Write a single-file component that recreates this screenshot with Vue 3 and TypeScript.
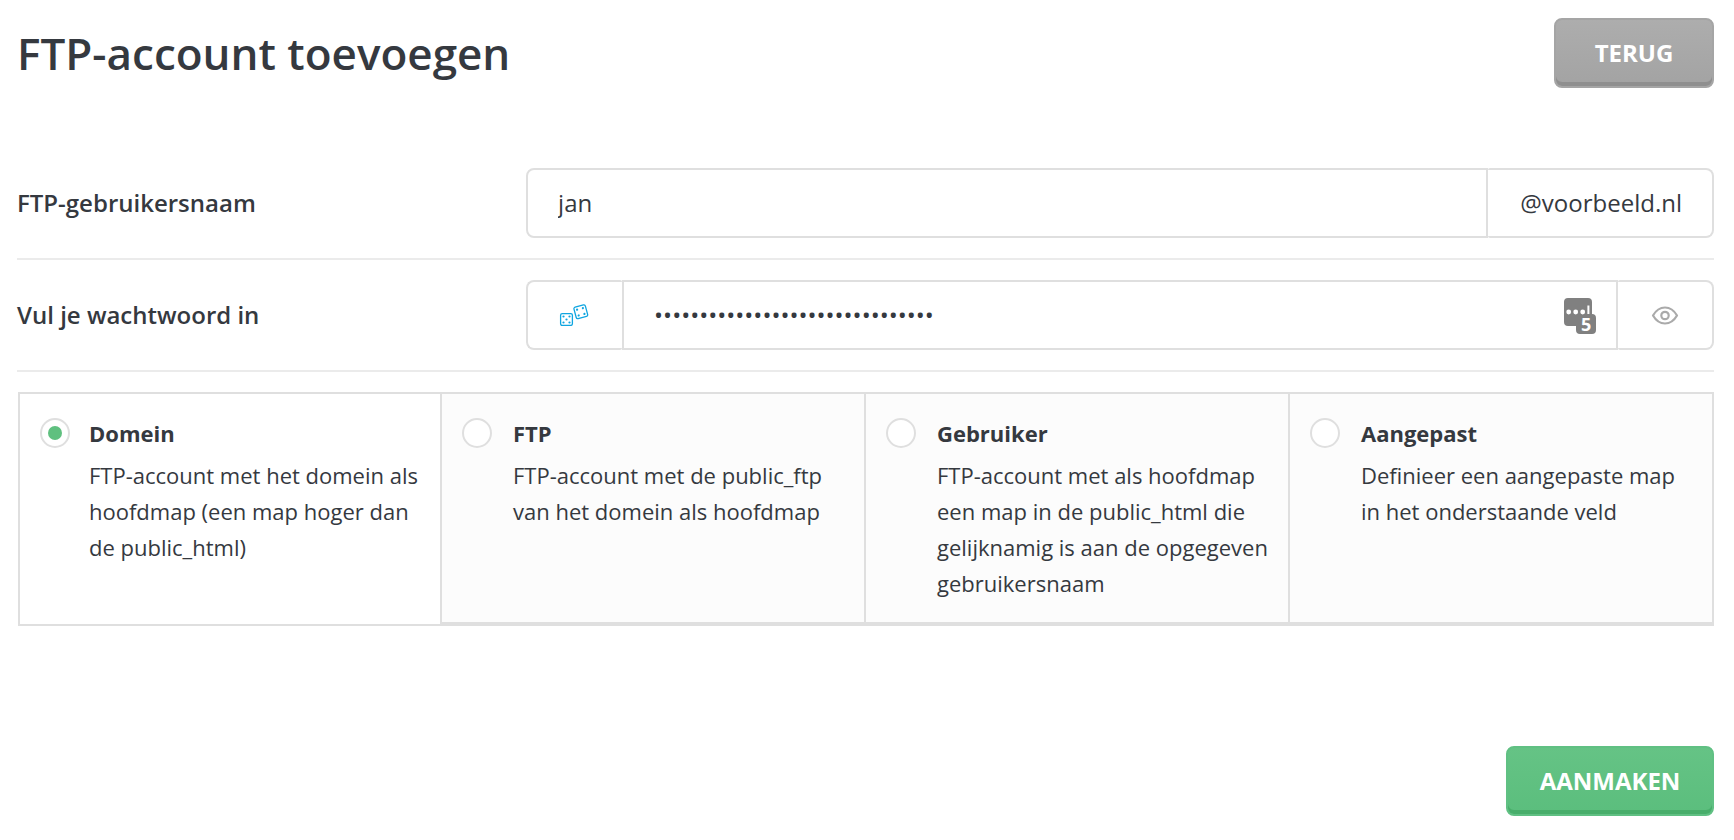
<script setup lang="ts">
import { ref } from 'vue'

interface AccountType {
  id: string
  title: string
  description: string
}

const accountTypes: AccountType[] = [
  {
    id: 'domein',
    title: 'Domein',
    description: 'FTP-account met het domein als hoofdmap (een map hoger dan de public_html)',
  },
  {
    id: 'ftp',
    title: 'FTP',
    description: 'FTP-account met de public_ftp van het domein als hoofdmap',
  },
  {
    id: 'gebruiker',
    title: 'Gebruiker',
    description:
      'FTP-account met als hoofdmap een map in de public_html die gelijknamig is aan de opgegeven gebruikersnaam',
  },
  {
    id: 'aangepast',
    title: 'Aangepast',
    description: 'Definieer een aangepaste map in het onderstaande veld',
  },
]

const username = ref('jan')
const password = ref('x'.repeat(31))
const selected = ref('domein')
const visible = ref(false)

function generatePassword(): void {
  const alphabet = 'abcdefghijkmnpqrstuvwxyzABCDEFGHJKLMNPQRSTUVWXYZ23456789'
  password.value = Array.from(
    { length: 31 },
    () => alphabet[Math.floor(Math.random() * alphabet.length)],
  ).join('')
}
</script>

<template>
  <form class="page" @submit.prevent>
    <header class="head">
      <h1>FTP-account toevoegen</h1>
      <button type="button" class="btn btn-grey">TERUG</button>
    </header>

    <div class="row">
      <label class="row-label" for="username">FTP-gebruikersnaam</label>
      <div class="group">
        <input id="username" v-model="username" class="field" type="text" />
        <span class="addon addon-text">@voorbeeld.nl</span>
      </div>
    </div>

    <div class="row">
      <label class="row-label" for="password">Vul je wachtwoord in</label>
      <div class="group">
        <button
          type="button"
          class="addon addon-icon addon-first"
          aria-label="Genereer wachtwoord"
          @click="generatePassword"
        >
          <svg width="32" height="22" viewBox="0 0 32 22" aria-hidden="true">
            <g fill="none" stroke="#0fa5e0" stroke-width="1.3">
              <rect x="1.6" y="9.6" width="11.8" height="11.8" rx="1.6" />
              <rect x="15.9" y="1.9" width="11.8" height="11.8" rx="1.6" transform="rotate(-15 21.8 7.8)" />
            </g>
            <g fill="#0fa5e0">
              <circle cx="4.5" cy="12.5" r="1.1" />
              <circle cx="10.5" cy="12.5" r="1.1" />
              <circle cx="7.5" cy="15.5" r="1.1" />
              <circle cx="4.5" cy="18.5" r="1.1" />
              <circle cx="10.5" cy="18.5" r="1.1" />
              <g transform="rotate(-15 21.8 7.8)">
                <circle cx="18.8" cy="4.8" r="1.1" />
                <circle cx="24.8" cy="4.8" r="1.1" />
                <circle cx="18.8" cy="10.8" r="1.1" />
                <circle cx="24.8" cy="10.8" r="1.1" />
              </g>
            </g>
          </svg>
        </button>
        <input
          id="password"
          v-model="password"
          class="field field-middle"
          :type="visible ? 'text' : 'password'"
        />
        <span class="manager">
          <svg width="32" height="36" viewBox="0 0 32 36" aria-hidden="true">
            <path
              fill="#808080"
              d="M4 0H24Q28 0 28 4V16Q32 16 32 20V32Q32 36 28 36H16Q12 36 12 32V28H4Q0 28 0 24V4Q0 0 4 0Z"
            />
            <g fill="#fff">
              <circle cx="4.7" cy="14" r="2.4" />
              <circle cx="11.7" cy="14" r="2.4" />
              <circle cx="18.7" cy="14" r="2.4" />
              <rect x="23.4" y="7.5" width="2" height="8.5" />
            </g>
            <text x="22.2" y="32.7" text-anchor="middle" class="manager-count">5</text>
          </svg>
        </span>
        <button
          type="button"
          class="addon addon-icon"
          aria-label="Toon wachtwoord"
          @click="visible = !visible"
        >
          <svg width="28" height="20" viewBox="-1 -1 28 20" fill="none" stroke="#aaa" stroke-width="2.2" aria-hidden="true">
            <path d="M1 9.500C4 4.300 8.300 1.500 13 1.500S22 4.300 25 9.500C22 14.700 17.700 17.500 13 17.500S4 14.700 1 9.500Z" stroke-linejoin="round" />
            <circle cx="13" cy="9.500" r="3.700" />
          </svg>
        </button>
      </div>
    </div>

    <fieldset class="cards" aria-label="Type account">
      <label
        v-for="type in accountTypes"
        :key="type.id"
        class="card"
        :class="{ active: selected === type.id }"
      >
        <input v-model="selected" type="radio" name="type" :value="type.id" />
        <span class="card-body">
          <strong>{{ type.title }}</strong>
          <span class="card-text">{{ type.description }}</span>
        </span>
      </label>
    </fieldset>

    <footer class="foot">
      <button type="submit" class="btn btn-green">AANMAKEN</button>
    </footer>
  </form>
</template>

<style>
body {
  margin: 0;
  background: #fff;
}
</style>

<style scoped>
.page {
  padding: 18px 20px 24px 17px;
  color: #35393f;
  font-family: "Open Sans", "Noto Sans", sans-serif;
  font-size: 24px;
}

.page *,
.page {
  box-sizing: border-box;
}

input,
button {
  font: inherit;
  color: inherit;
}

.head {
  display: flex;
  justify-content: space-between;
  align-items: flex-start;
  margin-bottom: 60px;
}

h1 {
  margin: 0;
  font-size: 44px;
  line-height: 70px;
  font-weight: 600;
}

.btn {
  height: 70px;
  padding: 0 30px 2px;
  border: 2px solid;
  border-radius: 8px;
  color: #fff;
  font-size: 24px;
  font-weight: 700;
  cursor: pointer;
}

.btn-grey {
  min-width: 160px;
  border-color: #a5a5a5;
  background: linear-gradient(#adadad, #a3a3a3);
  box-shadow: inset 0 -4px 0 #8f8f8f;
}

.btn-green {
  min-width: 208px;
  border-color: #60c083;
  background: linear-gradient(#65c385, #5bbe7d);
  box-shadow: inset 0 -4px 0 #48ae6b;
}

.row {
  display: flex;
  align-items: center;
  padding: 20px 0;
  border-bottom: 2px solid #ebebeb;
}

.row-label {
  flex: 0 0 30%;
  padding-bottom: 2px;
  font-weight: 600;
}

.group {
  position: relative;
  flex: 1;
  display: flex;
  height: 70px;
  min-width: 0;
}

.field {
  flex: 1;
  min-width: 0;
  padding: 0 30px 2px;
  border: 2px solid #dfdfdf;
  border-radius: 8px 0 0 8px;
  background: #fff;
  outline: none;
}

.field-middle {
  border-radius: 0;
}

.addon {
  display: flex;
  align-items: center;
  justify-content: center;
  border: 2px solid #dfdfdf;
  border-left: 0;
  border-radius: 2px 8px 8px 2px;
  background: #fff;
}

.addon-text {
  padding: 0 30px 2px 32px;
}

.addon-icon {
  width: 96px;
  padding: 0;
  cursor: pointer;
}

.addon-first {
  border-left: 2px solid #dfdfdf;
  border-right: 0;
  border-radius: 8px 2px 2px 8px;
}

.manager {
  position: absolute;
  right: 118px;
  top: 18px;
  height: 36px;
}

.manager svg {
  display: block;
  overflow: visible;
}

.manager-count {
  fill: #fff;
  font-size: 18px;
  font-weight: 700;
}

.cards {
  display: grid;
  grid-template-columns: repeat(4, 1fr);
  margin: 20px 0 0 1px;
  padding: 0;
  border: 0;
}

.card {
  display: grid;
  grid-template-columns: 51px 1fr;
  align-items: start;
  padding: 24px 16px 21px 20px;
  border: solid #dfdfdf;
  border-width: 2px 2px 4px 0;
  background: #fcfcfc;
  cursor: pointer;
}

.card:first-child {
  grid-template-columns: 49px 1fr;
  border-left-width: 2px;
}

.card.active {
  padding-bottom: 23px;
  border-bottom-width: 2px;
  background: #fff;
}

.card input {
  appearance: none;
  display: grid;
  place-items: center;
  width: 30px;
  height: 30px;
  margin: 0;
  border: 2px solid #dfdfdf;
  border-radius: 50%;
  background: #fff;
}

.card input:checked::before {
  content: "";
  width: 14px;
  height: 14px;
  border-radius: 50%;
  background: #5fc07f;
}

.card-body {
  display: flex;
  flex-direction: column;
  gap: 9px;
  font-size: 22px;
}

.card strong {
  line-height: 30px;
  font-weight: 700;
}

.card-text {
  line-height: 36px;
}

.foot {
  display: flex;
  justify-content: flex-end;
  padding-top: 120px;
}
</style>
